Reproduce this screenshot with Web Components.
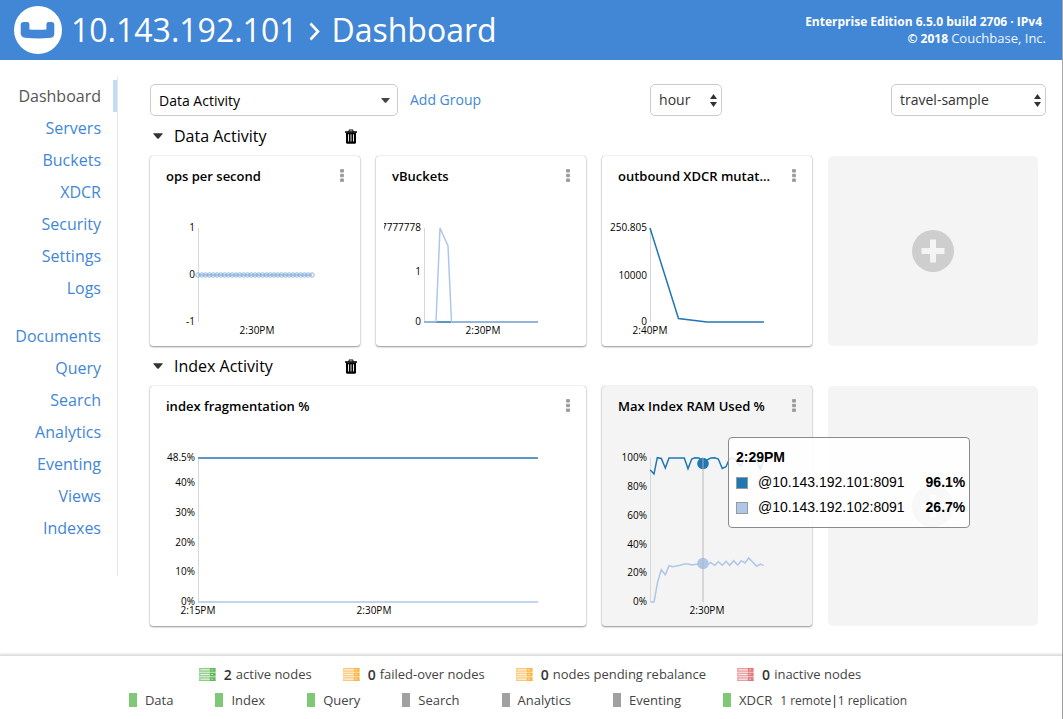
<!DOCTYPE html>
<html lang="en">
<head>
<meta charset="utf-8">
<title>Dashboard</title>
<style>
  html, body { margin: 0; height: 100%; }
  body { background: #fff; font-family: "Open Sans", "Noto Sans", sans-serif; font-size: 14px; color: #000; }
</style>
</head>
<body>
<cb-app>
  <cb-header slot="header" host="10.143.192.101" section="Dashboard"></cb-header>
  <cb-nav slot="nav"></cb-nav>
  <cb-toolbar></cb-toolbar>
  <cb-group heading="Data Activity">
    <cb-card heading="ops per second"><cb-chart kind="ops"></cb-chart></cb-card>
    <cb-card heading="vBuckets"><cb-chart kind="vbuckets"></cb-chart></cb-card>
    <cb-card heading="outbound XDCR mutat..."><cb-chart kind="xdcr"></cb-chart></cb-card>
    <cb-add></cb-add>
  </cb-group>
  <cb-group heading="Index Activity">
    <cb-card heading="index fragmentation %" wide><cb-chart kind="frag"></cb-chart></cb-card>
    <cb-card heading="Max Index RAM Used %" hovered>
      <cb-chart kind="ram"></cb-chart>
      <cb-tooltip slot="tip"></cb-tooltip>
    </cb-card>
    <cb-add></cb-add>
  </cb-group>
  <cb-footer slot="footer"></cb-footer>
</cb-app>

<script>
class Base extends HTMLElement {
  connectedCallback() {
    if (this.shadowRoot) return;
    this.attachShadow({ mode: "open" }).innerHTML =
      `<style>*{box-sizing:border-box}${this.css()}</style>${this.html()}`;
  }
}

customElements.define("cb-app", class extends Base {
  css() { return `
    :host{display:flex;flex-direction:column;min-height:100vh;box-sizing:border-box;border-right:1px solid #a6a6a6}
    .body{display:flex;flex:1;align-items:flex-start}
    main{flex:1;min-width:0;padding:24px 16px 28px 32px}
  `; }
  html() { return `<slot name="header"></slot>
    <div class="body"><slot name="nav"></slot><main><slot></slot></main></div>
    <slot name="footer"></slot>`; }
});

customElements.define("cb-header", class extends Base {
  css() { return `
    :host{display:block;background:#4287d6;color:#fff}
    header{display:flex;align-items:center;height:60px;padding:0 16px 0 14px}
    .logo{width:48px;height:48px;display:block;margin-right:9px}
    h1{margin:0;font-size:32px;line-height:44px;font-weight:400;display:flex;align-items:center;gap:11px;flex:1;white-space:nowrap}
    .sep{width:12px;height:22px;display:block}
    .info{font-size:12px;line-height:16px;font-weight:700;text-align:right;white-space:nowrap}
    .info p{margin:0}
    .ed{padding-right:4px}
    a{color:#f0f6ff;text-decoration:none;font-size:13px;font-weight:400}
  `; }
  html() { return `<header>
    <svg class="logo" viewBox="0 0 48 48" aria-hidden="true"><circle cx="24" cy="24" r="24" fill="#fff"/>
      <path d="M9.2 16h3.900q2.300 0 2.300 2.300v5.100q8.500.6 17 0v-5.100q0-2.300 2.300-2.300h3.300q2.300.3 2.300 2.600v9q0 3.700-3.300 4.200-13 1.400-26 0-4.200-.6-4.300-4.200v-9q0-2.300 2.500-2.600z" fill="#4287d6"/></svg>
    <h1><span>${this.getAttribute("host")}</span>
      <svg class="sep" viewBox="0 0 12 22" aria-hidden="true"><path d="M2.500 4.500l7.500 8-7.500 8" fill="none" stroke="#fff" stroke-width="2.600"/></svg>
      <span>${this.getAttribute("section")}</span></h1>
    <div class="info"><p class="ed">Enterprise Edition 6.5.0 build 2706 · IPv4</p><p>© 2018 <a href="#">Couchbase, Inc.</a></p></div>
  </header>`; }
});

customElements.define("cb-nav", class extends Base {
  css() { return `
    :host{display:block;flex:none;width:118px;padding-top:16px;box-sizing:border-box}
    nav{border-right:1px solid #e6e6e6;padding:4px 0 32px;display:flex;flex-direction:column;gap:16px}
    ul{list-style:none;margin:0;padding:0}
    a{display:block;font-size:16px;line-height:32px;height:32px;text-align:right;padding-right:12px;border-right:4px solid transparent;color:#4287d6;text-decoration:none}
    a[aria-current]{color:#555;border-color:#c3dbf3}
  `; }
  html() {
    const list = a => `<ul>${a.map(t => `<li><a href="#"${t === "Dashboard" ? ' aria-current="page"' : ""}>${t}</a></li>`).join("")}</ul>`;
    return `<nav>${list(["Dashboard","Servers","Buckets","XDCR","Security","Settings","Logs"])}${list(["Documents","Query","Search","Analytics","Eventing","Views","Indexes"])}</nav>`;
  }
});

customElements.define("cb-toolbar", class extends Base {
  css() { return `
    :host{display:flex;justify-content:space-between;align-items:center}
    .scenario{display:flex;align-items:center;gap:12px}
    a{color:#4287d6;text-decoration:none;font-size:14px;line-height:20px;white-space:nowrap}
    .pick{display:grid;align-items:center}
    .pick>*{grid-area:1/1}
    .pick svg{justify-self:end;pointer-events:none;margin-right:5px}
    .pick .down{margin-right:8px}
    select{appearance:none;width:100%;height:32px;padding:0 8px 2px;border:1px solid #ccc;border-radius:5px;background:#fff;color:#333;font:14px "Open Sans",sans-serif}
    .w1{width:248px}.w1 select{color:#000;padding-bottom:0}.w2{width:72px}.w3{width:155px}
  `; }
  html() {
    const ud = `<svg width="7" height="13" viewBox="0 0 7 13" aria-hidden="true"><path d="M0 5l3.500-5L7 5zM0 8h7l-3.500 5z" fill="#333"/></svg>`;
    return `<div class="scenario"><div class="pick w1"><select aria-label="Scenario"><option>Data Activity</option></select>
      <svg class="down" width="9" height="5" viewBox="0 0 9 5" aria-hidden="true"><path d="M.7 0h7.600q.7 0 .4.600L5.300 4.500q-.8.700-1.600 0L.3.600Q0 0 .7 0z" fill="#444"/></svg></div>
      <a href="#">Add Group</a></div>
      <div class="pick w2"><select aria-label="Time span"><option>hour</option></select>${ud}</div>
      <div class="pick w3"><select aria-label="Bucket"><option>travel-sample</option></select>${ud}</div>`;
  }
});

customElements.define("cb-group", class extends Base {
  css() { return `
    :host{display:block;padding-right:8px}
    .grid{display:grid;grid-template-columns:repeat(4,minmax(0,1fr));column-gap:16px}
    .head{height:40px;display:flex;align-items:center;padding:0 3px}
    h2{margin:0;font-size:16px;line-height:24px;font-weight:400;flex:1;white-space:nowrap}
    button{border:0;background:none;padding:0;display:block}
    .fold{width:21px;height:12px}
    svg{display:block}
  `; }
  html() { return `<div class="grid"><div class="head">
      <button class="fold" aria-label="Collapse group"><svg width="10" height="10" viewBox="0 0 11 10"><path d="M.8 2h9.400q1 0 .4.900L6.300 7.700q-.8.800-1.600 0L.4 2.900Q-.2 2 .8 2z" fill="#333"/></svg></button>
      <h2>${this.getAttribute("heading")}</h2>
      <button aria-label="Delete group"><svg width="12" height="15" viewBox="0 0 12 15"><path d="M0 2.200h3.300L4 .5h4l.7 1.700H12v1.500H0z" fill="#000"/><path d="M4.300 2.200h3.400l-.3-.8H4.600z" fill="#fff"/><path d="M1 3.500h10v9.700q0 1.500-1.500 1.500h-7Q1 14.700 1 13.200z" fill="#000"/><path d="M3.500 5.300v7.200M6 5.300v7.200M8.500 5.300v7.200" stroke="#fff" stroke-width=".9"/></svg></button>
    </div></div>
    <div class="grid"><slot></slot></div>`; }
});

customElements.define("cb-card", class extends Base {
  css() { return `
    :host{display:block;position:relative;box-sizing:border-box;background:#fff;border-radius:3px;padding-bottom:2px;box-shadow:0 0 1px rgba(0,0,0,.4),0 1px 2px rgba(0,0,0,.4)}
    :host([wide]){grid-column:span 2}
    :host([hovered]){background:#f4f4f4;z-index:1}
    .top{height:56px;padding:10px 16px 0;display:flex;align-items:flex-start;gap:8px}
    h3{margin:0;font-size:13px;line-height:20px;font-weight:600;flex:1;min-width:0;white-space:nowrap}
    button{border:0;background:none;padding:3px 0;display:block}
    svg{display:block}
    .plot{padding:0 8px}
    .tip{position:absolute;left:126px;top:51px}
  `; }
  html() { return `<div class="top"><h3>${this.getAttribute("heading")}</h3>
      <button aria-label="Chart menu"><svg width="4" height="13" viewBox="0 0 4 13"><path d="M.5.500h3v2.600h-3zM.5 5.200h3v2.600h-3zM.5 9.900h3v2.600h-3z" fill="#999" stroke="#999" stroke-width=".8" stroke-linejoin="round"/></svg></button></div>
    <div class="plot"><slot></slot></div><div class="tip"><slot name="tip"></slot></div>`; }
});

customElements.define("cb-add", class extends Base {
  css() { return `
    :host{display:flex;align-items:center;justify-content:center;background:#f4f4f4;border-radius:5px}
    button{border:0;background:none;padding:0}svg{display:block}
  `; }
  html() { return `<button aria-label="Add chart"><svg width="42" height="42" viewBox="0 0 42 42"><circle cx="21" cy="21" r="21" fill="#cecece"/><path d="M21 9.500v23M9.500 21h23" stroke="#f4f4f4" stroke-width="6"/></svg></button>`; }
});

const yl = (y, t) => `<text x="37" y="${y}" text-anchor="end">${t}</text>`;
const xl = (x, y, t) => `<text x="${x}" y="${y}" text-anchor="middle">${t}</text>`;
const axis = h => `<path d="M40.500 16V${h}" stroke="#d8d8d8"/>`;
const line = (pts, c, w = 1.500) => `<polyline points="${pts}" fill="none" stroke="${c}" stroke-width="${w}"/>`;
const DARK = "#1f77b4", LIGHT = "#aec7e8";
const charts = {
  ops: [194, 132, () => axis(110) + yl(19, "1") + yl(66, "0") + yl(113, "-1") + xl(99, 122, "2:30PM") +
    line("40,63 154,63", "#7fa9d6", 2) +
    Array.from({ length: 31 }, (_, i) => `<circle cx="${40 + i * 3.8}" cy="63" r="2.200" fill="#fff" fill-opacity=".3" stroke="#8db3dc" stroke-width="1"/>`).join("")],
  vbuckets: [194, 132, () => axis(110) + yl(19, "7777778") + yl(63, "1") + yl(113, "0") + xl(99, 122, "2:30PM") +
    line("40,110 154,110", "#94b5dc", 2) + line("52,110 67,110", "#5b98c6", 2) + line("52,110 56,16 64,34 67.500,110", LIGHT)],
  xdcr: [194, 132, () => axis(110) + yl(19, "250.805") + yl(67, "10000") + yl(113, "0") + xl(40, 122, "2:40PM") +
    line("40,16 68.500,106.500 97,110", DARK) + line("97,110 154,110", "#5b98c6", 2)],
  frag: [420, 182, () => axis(160) + yl(19, "48.5%") + yl(44, "40%") + yl(74, "30%") + yl(104, "20%") + yl(133, "10%") + yl(163, "0%") +
    xl(40, 172, "2:15PM") + xl(216, 172, "2:30PM") + line("40,16 380,16", "#5b98c6", 2) + line("40,160 380,160", "#c3d5ee", 2)],
  ram: [194, 182, () => axis(160) + yl(19, "100%") + yl(48, "80%") + yl(77, "60%") + yl(106, "40%") + yl(134, "20%") + yl(163, "0%") + xl(97, 172, "2:30PM") +
    line("40.300,28 44,32 47.300,15.700 51.300,16.500 55.300,26 59,16 74.300,16 78,26.700 81.700,17 85,15.700 89,16 93.300,21.300 96.700,18 100.700,16 104.700,15.700 108.300,17 112.300,26.500 116,24.700 119.300,17.300 122.300,16 125,17 128.300,22 131,24 134,16 145,16 147,19 150.300,27.300 153.300,19.300", DARK) +
    line("40.300,160 44,160 47.700,139.700 51.300,127.700 55.300,132.700 59,123.700 62.700,124.700 70,123.300 74.300,122 78,122 82,123 86,122.300 93.300,121.700 97.300,122.700 100.700,120.700 104.700,123.300 108.300,119.700 112.300,123.300 116,119.300 119.700,123.300 123.700,118.700 127.700,123 131.300,118.700 135,121 138.700,116 146.700,124.300 150.300,122 153.700,123.700", LIGHT) +
    `<circle cx="93" cy="21.500" r="5.800" fill="${DARK}"/><circle cx="93" cy="121.500" r="5.800" fill="${LIGHT}"/><path d="M93 16V160" stroke="#b4b4b4" stroke-opacity=".45" stroke-width="2"/>`]
};
customElements.define("cb-chart", class extends Base {
  css() { return `:host{display:block}
    svg{display:block;width:100%;overflow:hidden}
    text{font:10px "Open Sans",sans-serif;fill:#000}`; }
  html() {
    const [w, h, draw] = charts[this.getAttribute("kind")];
    return `<svg height="${h}" viewBox="0 0 ${w} ${h}" role="img" aria-label="${this.getAttribute("kind")}">${draw()}</svg>`;
  }
});

customElements.define("cb-tooltip", class extends Base {
  css() { return `
    :host{display:block;border:1px solid #8a8a8a;border-radius:4px;background:rgba(255,255,255,.86);padding:7px 4px 7px 7px;font:14px/25px "Liberation Sans",Arial,sans-serif;white-space:nowrap}
    table{border-collapse:collapse}
    caption{text-align:left;font-weight:700}
    th,td{padding:0;height:25px;text-align:left;font-weight:400}
    i{display:block;width:12px;height:12px;border:1px solid #999;margin-right:10px}
    .v{font-weight:700;padding-left:21px;text-align:right}
  `; }
  html() { return `<table><caption>2:29PM</caption>
    <tr><td><i style="background:#1f77b4"></i></td><th scope="row">@10.143.192.101:8091</th><td class="v">96.1%</td></tr>
    <tr><td><i style="background:#aec7e8"></i></td><th scope="row">@10.143.192.102:8091</th><td class="v">26.7%</td></tr></table>`; }
});

customElements.define("cb-footer", class extends Base {
  css() { return `
    :host{display:block;border-top:1px solid #ddd;box-shadow:0 -1px 2px rgba(0,0,0,.15);font-size:13px;color:#444}
    footer{padding:5px 0 6px}
    ul{list-style:none;margin:0;padding:0;display:flex;justify-content:center;white-space:nowrap}
    li{display:flex;align-items:center;gap:8px;height:26px}
    .nodes{gap:31px;padding-right:2px}
    .services{gap:42px;padding-right:26px}
    b{font-weight:600;font-size:14px;color:#333}
    .t{display:flex;align-items:center;gap:4px}
    .m{width:8px;height:14px;background:#a0a0a0}
    .on{background:#7fc878}
    small{font-size:12px}
    small span{color:#000}
    svg{display:block}
  `; }
  html() {
    const bar = (y, c) => `<rect x="0" y="${y}" width="17" height="4" fill="${c}" opacity=".5"/><rect x="11" y="${y}" width="5" height="4" fill="${c}" opacity=".7"/><path d="M1.500 ${y + 2}h9" stroke="#fff" stroke-opacity=".8" stroke-width="1"/><path d="M0 ${y + .5}h17M0 ${y + 3.5}h17" stroke="${c}" stroke-opacity=".3"/><path d="M12.300 ${y + 2}h1.700" stroke="#fff" stroke-opacity=".7"/>`;
    const node = (c, n, t) => `<li><svg width="17" height="13" viewBox="0 0 17 14" preserveAspectRatio="none" aria-hidden="true">${[0, 5, 10].map(y => bar(y, c)).join("")}</svg><span class="t"><b>${n}</b> <span>${t}</span></span></li>`;
    const svc = (t, on, x = "") => `<li><span class="m${on ? " on" : ""}"></span><span>${t}</span>${x}</li>`;
    return `<footer><ul class="nodes">${node("#4caf45", 2, "active nodes")}${node("#fbab2e", 0, "failed-over nodes")}${node("#fbab2e", 0, "nodes pending rebalance")}${node("#e0646a", 0, "inactive nodes")}</ul>
      <ul class="services">${svc("Data", 1)}${svc("Index", 1)}${svc("Query", 1)}${svc("Search")}${svc("Analytics")}${svc("Eventing")}${svc("XDCR", 1, "<small>1 remote<span>|</span>1 replication</small>")}</ul></footer>`;
  }
});
</script>
</body>
</html>
